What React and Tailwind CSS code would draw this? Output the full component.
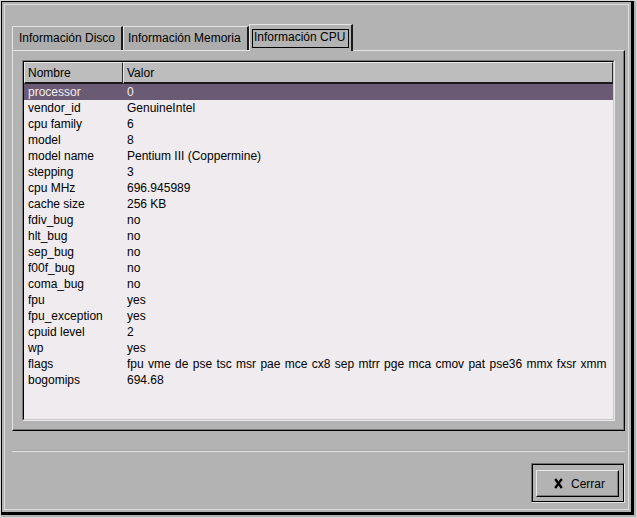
import React from 'react';

const rows = [
  ['processor', '0'],
  ['vendor_id', 'GenuineIntel'],
  ['cpu family', '6'],
  ['model', '8'],
  ['model name', 'Pentium III (Coppermine)'],
  ['stepping', '3'],
  ['cpu MHz', '696.945989'],
  ['cache size', '256 KB'],
  ['fdiv_bug', 'no'],
  ['hlt_bug', 'no'],
  ['sep_bug', 'no'],
  ['f00f_bug', 'no'],
  ['coma_bug', 'no'],
  ['fpu', 'yes'],
  ['fpu_exception', 'yes'],
  ['cpuid level', '2'],
  ['wp', 'yes'],
  ['flags', 'fpu vme de pse tsc msr pae mce cx8 sep mtrr pge mca cmov pat pse36 mmx fxsr xmm'],
  ['bogomips', '694.68'],
];

function Tab({ label, width, pl }) {
  return (
    <div
      className={`h-[24px] ${width} ${pl} border-l border-t border-r-2 border-l-[#e4e4e4] border-t-[#e4e4e4] border-r-[#1a1a1a] bg-[#adadad] leading-[23px] whitespace-nowrap overflow-hidden`}
    >
      {label}
    </div>
  );
}

export default function App() {
  return (
    <div className="w-[637px] h-[518px] bg-[#b3b3b3] border border-[#d6d6d6] pr-[2px] pb-[2px] text-[12px] text-black font-['Liberation_Sans',Arial,sans-serif]">
      <div className="h-full border-l border-t border-r-[3px] border-b-[3px] border-black p-[2px]">
        <div className="h-full border border-[#dcdcdc] flex flex-col pl-[7px] pr-[3px] pt-[19px]">
          {/* tabs */}
          <div className="flex items-end h-[26px]">
            <Tab label="Información Disco" width="w-[111px]" pl="pl-[6px]" />
            <Tab label="Información Memoria" width="w-[126px]" pl="pl-[4px]" />
            <div className="relative z-10 -mb-[1px] h-[27px] w-[104px] border-l border-t border-r-2 border-l-[#e4e4e4] border-t-[#e4e4e4] border-r-[#1a1a1a] bg-[#b3b3b3] pl-[2px] pt-[4px]">
              <div className="w-[97px] h-[19px] border border-black pl-[1px] leading-[14px] whitespace-nowrap">Información CPU</div>
            </div>
          </div>

          {/* notebook panel */}
          <div className="h-[381px] border-l border-t border-l-[#e4e4e4] border-t-[#e4e4e4] border-r border-b border-r-black border-b-black shadow-[inset_-1px_-1px_0_#7a7a7a] pl-[9px] pt-[9px] pr-[9px] pb-[9px]">
            <div className="h-[361px] border border-t-[#7a7a7a] border-l-[#7a7a7a] border-r-[#eaeaea] border-b-[#eaeaea]">
              <div className="h-full border border-t-black border-l-black border-r-[#c8c8c8] border-b-[#c8c8c8] bg-[#efebef] overflow-hidden">
                <div className="flex h-[22px] bg-[#bdbdbd]">
                  <div className="w-[99px] border-l border-t border-l-[#e8e8e8] border-t-[#e8e8e8] border-r border-b-2 border-r-[#2a2a2a] border-b-[#1a1a1a] pl-[3px] pt-[1px] leading-[18px]">Nombre</div>
                  <div className="flex-1 border-l border-t border-l-[#e8e8e8] border-t-[#e8e8e8] border-r border-b-2 border-r-[#2a2a2a] border-b-[#1a1a1a] pl-[3px] pt-[1px] leading-[18px]">Valor</div>
                </div>
                {rows.map(([k, v], i) => (
                  <div
                    key={k}
                    className={`flex h-[16px] pt-[1px] leading-[15px] whitespace-nowrap ${i === 0 ? 'bg-[#6b5a73] text-[#f2eff2]' : ''}`}
                  >
                    <div className="w-[99px] pl-[4px] shrink-0">{k}</div>
                    <div className={`pl-[4px] ${k === 'flags' ? '[word-spacing:1px]' : ''}`}>{v}</div>
                  </div>
                ))}
              </div>
            </div>
          </div>

          {/* separator */}
          <div className="mt-[19px] h-[2px] border-t border-t-[#a4a4a4] border-b border-b-[#e2e2e2]" />

          {/* button */}
          <div className="flex justify-end mt-[11px]">
            <div className="w-[94px] h-[40px] border border-t-[#6f6f6f] border-l-[#6f6f6f] border-r-[#e4e4e4] border-b-[#e4e4e4]">
              <div className="h-full border border-black pl-[3px] pt-[5px]">
                <div className="w-[83px] h-[27px] border-l border-t border-l-[#e8e8e8] border-t-[#e8e8e8] border-r border-b border-r-black border-b-black shadow-[inset_-1px_-1px_0_#7a7a7a] flex items-center pl-[17px] leading-[24px]">
                  <svg width="9" height="11" viewBox="0 0 9 11" className="mr-[8px]">
                    <path d="M1.2 1 L7.8 10 M7.8 1 L1.2 10" stroke="black" strokeWidth="2.3" fill="none" />
                  </svg>
                  <span>Cerrar</span>
                </div>
              </div>
            </div>
          </div>
        </div>
      </div>
    </div>
  );
}
